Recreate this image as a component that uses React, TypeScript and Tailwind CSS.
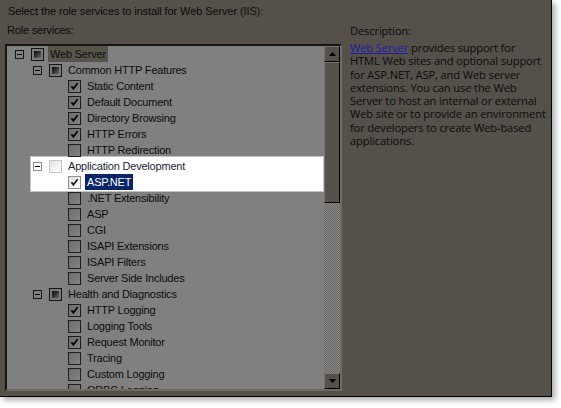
import React from "react";

type Box = "tri" | "on" | "off";
type Item = { level: number; label: string; box: Box; exp?: boolean; sel?: boolean };

const ABOVE: Item[] = [
  { level: 0, label: "Web Server", box: "tri", exp: true, sel: true },
  { level: 1, label: "Common HTTP Features", box: "tri", exp: true },
  { level: 2, label: "Static Content", box: "on" },
  { level: 2, label: "Default Document", box: "on" },
  { level: 2, label: "Directory Browsing", box: "on" },
  { level: 2, label: "HTTP Errors", box: "on" },
  { level: 2, label: "HTTP Redirection", box: "off" },
];

const BELOW: Item[] = [
  { level: 2, label: ".NET Extensibility", box: "off" },
  { level: 2, label: "ASP", box: "off" },
  { level: 2, label: "CGI", box: "off" },
  { level: 2, label: "ISAPI Extensions", box: "off" },
  { level: 2, label: "ISAPI Filters", box: "off" },
  { level: 2, label: "Server Side Includes", box: "off" },
  { level: 1, label: "Health and Diagnostics", box: "tri", exp: true },
  { level: 2, label: "HTTP Logging", box: "on" },
  { level: 2, label: "Logging Tools", box: "off" },
  { level: 2, label: "Request Monitor", box: "on" },
  { level: 2, label: "Tracing", box: "off" },
  { level: 2, label: "Custom Logging", box: "off" },
  { level: 2, label: "ODBC Logging", box: "off" },
];

// left padding of a row, by level (expander slot is 16px wide)
const INDENT = ["pl-[8px]", "pl-[26px]", "pl-[45px]"];

const DESC = [
  "HTML Web sites and optional support",
  "for ASP.NET, ASP, and Web server",
  "extensions. You can use the Web",
  "Server to host an internal or external",
  "Web site or to provide an environment",
  "for developers to create Web-based",
  "applications.",
];

function Check({ color = "#000" }: { color?: string }) {
  return (
    <svg width="11" height="11" viewBox="0 0 11 11" className="block">
      <path d="M2.5 5.2 L4.4 7.8 L8.6 2.2" fill="none" stroke={color} strokeWidth="1.7" />
    </svg>
  );
}

function Expander({ light }: { light?: boolean }) {
  return (
    <div className="w-[16px] h-full flex items-center">
      <div
        className={
          light
            ? "w-[9px] h-[9px] border border-[#8c8c8c] bg-white flex items-center justify-center"
            : "w-[9px] h-[9px] border border-[#161616] bg-[#808080] flex items-center justify-center"
        }
      >
        <div className="w-[5px] h-px bg-black" />
      </div>
    </div>
  );
}

function DarkBox({ box }: { box: Box }) {
  if (box === "tri") {
    return (
      <div className="w-[13px] h-[13px] border border-[#141414] bg-[#7c7c7c] flex items-center justify-center">
        <div className="w-[7px] h-[7px] bg-gradient-to-br from-[#0a0a0a] to-[#6a6a6a]" />
      </div>
    );
  }
  return (
    <div className="w-[13px] h-[13px] border border-[#1e1e1e] bg-gradient-to-br from-[#6c6c6c] to-[#828282]">
      {box === "on" && <Check />}
    </div>
  );
}

function Row({ item }: { item: Item }) {
  return (
    <div className={`h-4 flex items-center ${INDENT[item.level]}`}>
      {item.exp ? <Expander /> : <div className="w-[16px]" />}
      <DarkBox box={item.box} />
      <span
        className={`ml-[4px] px-[2px] leading-[16px] whitespace-nowrap text-[#0c0c0c] ${
          item.sel ? "bg-[#59544b]" : ""
        }`}
      >
        {item.label}
      </span>
    </div>
  );
}

function ScrollButton({ up }: { up?: boolean }) {
  return (
    <div className="h-4 bg-[#555049] border border-t-[#7a766e] border-l-[#7a766e] border-b-black border-r-black flex items-center justify-center">
      <svg width="7" height="4" viewBox="0 0 7 4">
        <path d={up ? "M3.5 0 L7 4 L0 4 Z" : "M0 0 L7 0 L3.5 4 Z"} fill="#000" />
      </svg>
    </div>
  );
}

export default function App() {
  return (
    <div className="w-[561px] h-[408px] bg-white overflow-hidden font-['Liberation_Sans',Arial,sans-serif] text-[11px]">
      <div className="w-[552px] h-[397px] bg-[#555049] border-r border-b border-black shadow-[3px_3px_6px_rgba(0,0,0,0.35)]">
        <div className="pl-[8px] pt-[4px] leading-[14px] text-[#0c0c0c] tracking-[-0.1px]">
          Select the role services to install for Web Server (IIS):
        </div>
        <div className="flex mt-[5px]">
          <div className="ml-[5px] w-[337px] tracking-[-0.2px]">
            <div className="pl-[2px] leading-[14px] text-[#0c0c0c]">Role services:</div>
            <div className="mt-[7px] h-[347px] flex border-2 border-t-[#161513] border-l-[#161513] border-b-[#6f6b63] border-r-[#6f6b63]">
              <div className="flex-1 bg-[#808080] overflow-hidden">
                {ABOVE.map((it) => (
                  <Row key={it.label} item={it} />
                ))}
                <div className="ml-[23px] w-[294px] -my-[2px] py-px bg-white border border-[#c4c4c4]">
                  <div className="h-4 flex items-center pl-[2px]">
                    <Expander light />
                    <div className="w-[13px] h-[13px] border border-[#c6c6c6] bg-gradient-to-br from-[#e4e4e4] to-white" />
                    <span className="ml-[4px] px-[2px] leading-[16px] whitespace-nowrap text-[#1c1f3c]">
                      Application Development
                    </span>
                  </div>
                  <div className="h-4 flex items-center pl-[21px]">
                    <div className="w-[16px]" />
                    <div className="w-[13px] h-[13px] border border-[#8e8e8e] bg-gradient-to-br from-[#e2e2e2] to-white">
                      <Check color="#1a1a1a" />
                    </div>
                    <span className="ml-[4px] px-[2px] leading-[16px] whitespace-nowrap bg-[#0a246a] text-white">
                      ASP.NET
                    </span>
                  </div>
                </div>
                {BELOW.map((it) => (
                  <Row key={it.label} item={it} />
                ))}
              </div>
              <div className="w-[16px] flex flex-col">
                <ScrollButton up />
                <div className="h-[141px] bg-[#555049] border border-t-[#7a766e] border-l-[#7a766e] border-b-black border-r-black" />
                <div className="flex-1 bg-[repeating-conic-gradient(#6a6864_0_25%,#8a8884_0_50%)] bg-[length:2px_2px]" />
                <ScrollButton />
              </div>
            </div>
          </div>
          <div className="ml-[8px] text-[#0c0c0c] font-['Open_Sans',sans-serif] text-[11.2px] tracking-[-0.15px]">
            <div className="h-[14px] leading-[14px] mt-px">Description:</div>
            <div className="mt-[3px] whitespace-nowrap">
              <div className="h-[13.3px] leading-[13.3px]">
                <span className="text-[#1e1ea8] underline">Web Server</span> provides support for
              </div>
              {DESC.map((line) => (
                <div key={line} className="h-[13.3px] leading-[13.3px]">
                  {line}
                </div>
              ))}
            </div>
          </div>
        </div>
      </div>
    </div>
  );
}
